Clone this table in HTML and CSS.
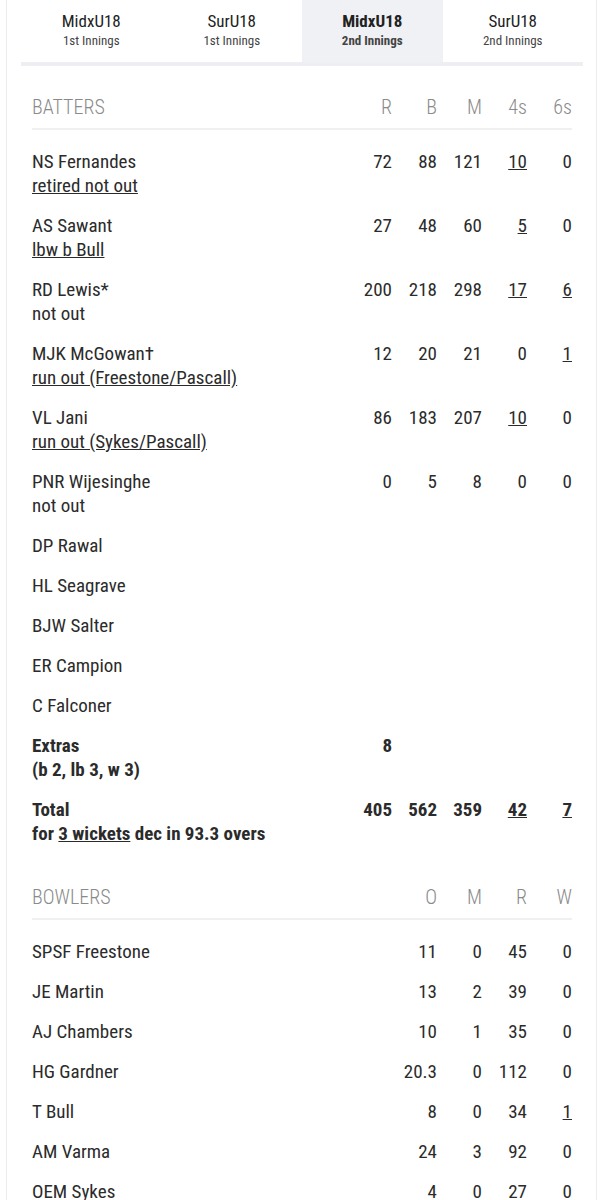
FILE: index.html
```html
<!DOCTYPE html>
<html>
<head>
<meta charset="utf-8">
<link rel="stylesheet" href="styles.css">
</head>
<body>
<div class="card">
  <div class="tabs">
    <div class="tab"><div class="team">MidxU18</div><div class="inn">1st Innings</div></div>
    <div class="tab"><div class="team">SurU18</div><div class="inn">1st Innings</div></div>
    <div class="tab active"><div class="team">MidxU18</div><div class="inn">2nd Innings</div></div>
    <div class="tab"><div class="team">SurU18</div><div class="inn">2nd Innings</div></div>
  </div>

  <section class="section">
    <div class="row bat head">
      <div class="name">BATTERS</div><div>R</div><div>B</div><div>M</div><div>4s</div><div>6s</div>
    </div>
    <div class="body">
      <div class="row bat">
        <div class="name">NS Fernandes<br><a>retired not out</a></div><div>72</div><div>88</div><div>121</div><div><a>10</a></div><div>0</div>
      </div>
      <div class="row bat">
        <div class="name">AS Sawant<br><a>lbw b Bull</a></div><div>27</div><div>48</div><div>60</div><div><a>5</a></div><div>0</div>
      </div>
      <div class="row bat">
        <div class="name">RD Lewis*<br>not out</div><div>200</div><div>218</div><div>298</div><div><a>17</a></div><div><a>6</a></div>
      </div>
      <div class="row bat">
        <div class="name">MJK McGowan†<br><a>run out (Freestone/Pascall)</a></div><div>12</div><div>20</div><div>21</div><div>0</div><div><a>1</a></div>
      </div>
      <div class="row bat">
        <div class="name">VL Jani<br><a>run out (Sykes/Pascall)</a></div><div>86</div><div>183</div><div>207</div><div><a>10</a></div><div>0</div>
      </div>
      <div class="row bat">
        <div class="name">PNR Wijesinghe<br>not out</div><div>0</div><div>5</div><div>8</div><div>0</div><div>0</div>
      </div>
      <div class="row bat"><div class="name">DP Rawal</div></div>
      <div class="row bat"><div class="name">HL Seagrave</div></div>
      <div class="row bat"><div class="name">BJW Salter</div></div>
      <div class="row bat"><div class="name">ER Campion</div></div>
      <div class="row bat"><div class="name">C Falconer</div></div>
      <div class="row bat bold">
        <div class="name">Extras<br>(b 2, lb 3, w 3)</div><div>8</div>
      </div>
      <div class="row bat bold">
        <div class="name">Total<br>for <a>3 wickets</a> dec in 93.3 overs</div><div>405</div><div>562</div><div>359</div><div><a>42</a></div><div><a>7</a></div>
      </div>
    </div>
  </section>

  <section class="section">
    <div class="row bowl head">
      <div class="name">BOWLERS</div><div>O</div><div>M</div><div>R</div><div>W</div>
    </div>
    <div class="body">
      <div class="row bowl"><div class="name">SPSF Freestone</div><div>11</div><div>0</div><div>45</div><div>0</div></div>
      <div class="row bowl"><div class="name">JE Martin</div><div>13</div><div>2</div><div>39</div><div>0</div></div>
      <div class="row bowl"><div class="name">AJ Chambers</div><div>10</div><div>1</div><div>35</div><div>0</div></div>
      <div class="row bowl"><div class="name">HG Gardner</div><div>20.3</div><div>0</div><div>112</div><div>0</div></div>
      <div class="row bowl"><div class="name">T Bull</div><div>8</div><div>0</div><div>34</div><div><a>1</a></div></div>
      <div class="row bowl"><div class="name">AM Varma</div><div>24</div><div>3</div><div>92</div><div>0</div></div>
      <div class="row bowl"><div class="name">OEM Sykes</div><div>4</div><div>0</div><div>27</div><div>0</div></div>
    </div>
  </section>
</div>
</body>
</html>
```

FILE: styles.css
```css
html, body {
  margin: 0;
  padding: 0;
  background: #fff;
}
body {
  font-family: "Roboto Condensed", Roboto, "Liberation Sans Narrow", sans-serif;
  font-stretch: condensed;
  color: #2b2b2b;
}
.card {
  margin-left: 6px;
  width: 589px;
  border-left: 1px solid #ececec;
  border-right: 1px solid #ececec;
  min-height: 1200px;
}
.tabs {
  display: grid;
  grid-template-columns: repeat(4, 1fr);
  margin: 0 13px 0 14px;
  border-bottom: 4px solid #eeeff2;
}
.tab {
  text-align: center;
  padding: 11px 0 11px;
  height: 40px;
}
.tab .team {
  font-size: 17px;
  line-height: 20px;
  color: #222;
}
.tab .inn {
  font-size: 13px;
  line-height: 20px;
  color: #444;
}
.tab.active {
  background: #f0f1f4;
  font-weight: bold;
}
.section {
  padding: 29px 24px 0 25px;
}
.section + .section {
  padding-top: 31px;
}
.row {
  display: grid;
  font-size: 19px;
  line-height: 24px;
  padding: 8px 0;
}
.row > div {
  text-align: right;
}
.row > .name {
  text-align: left;
}
.bat {
  grid-template-columns: 1fr repeat(5, 45px);
}
.bowl {
  grid-template-columns: 1fr repeat(4, 45px);
}
.head {
  padding: 0 0 9px;
  color: #8a8a8a;
  font-size: 20px;
  font-weight: 300;
  border-bottom: 2px solid #f0f0f0;
}
.body {
  padding-top: 12px;
}
.bold {
  font-weight: bold;
}
a {
  text-decoration: underline;
  color: inherit;
}
```
